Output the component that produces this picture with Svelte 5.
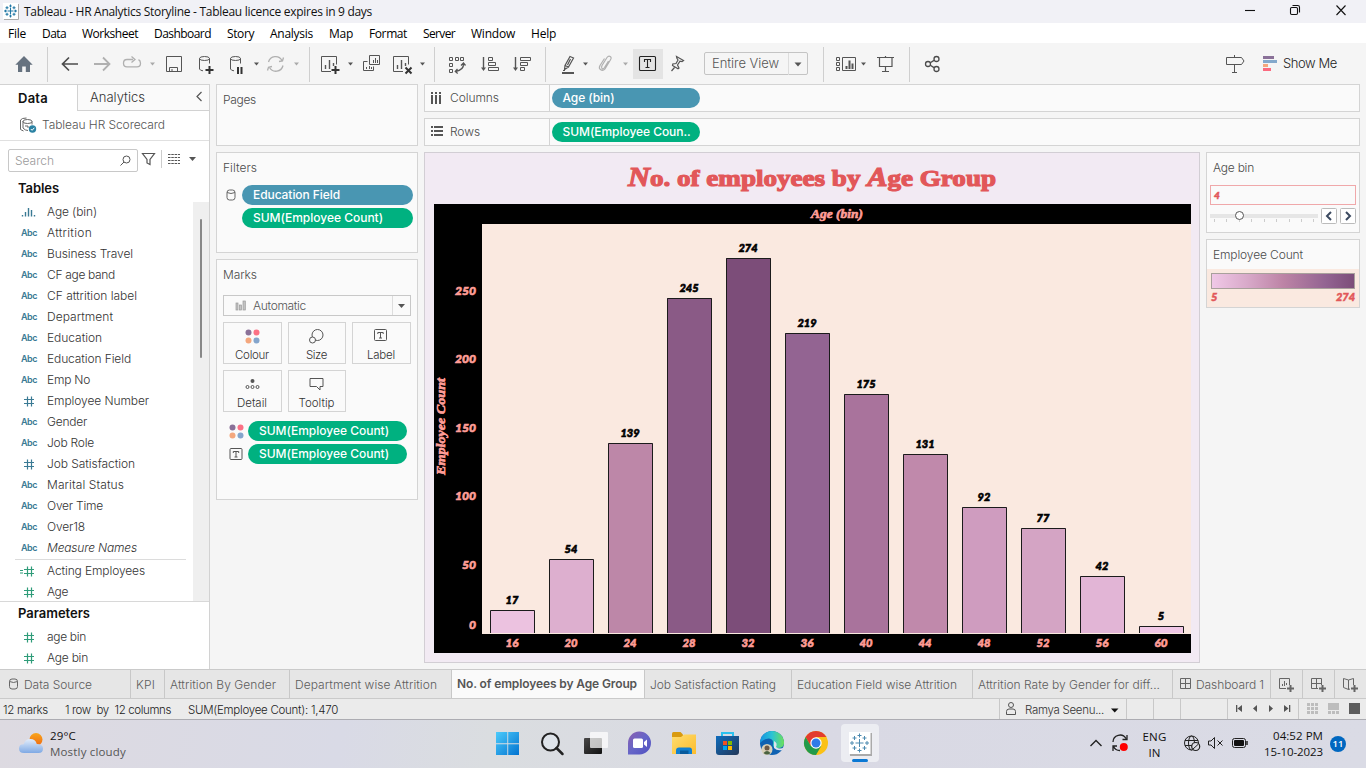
<script>
  // Tracks a label out (or in) so that it occupies the given width in pixels.
  function fit(node, width) {
    node.style.letterSpacing = '0px';
    const natural = node.getBoundingClientRect().width;
    const n = node.textContent.length;
    node.style.letterSpacing = (width - natural) / n + 'px';
  }

  const menus = [['File', 18], ['Data', 24], ['Worksheet', 56], ['Dashboard', 57], ['Story', 27], ['Analysis', 43], ['Map', 24], ['Format', 38], ['Server', 32], ['Window', 44], ['Help', 25]];

  const fields = [
    ['bin', 'Age (bin)', 50], ['abc', 'Attrition', 45], ['abc', 'Business Travel', 86], ['abc', 'CF age band', 68],
    ['abc', 'CF attrition label', 90], ['abc', 'Department', 66], ['abc', 'Education', 55], ['abc', 'Education Field', 84],
    ['abc', 'Emp No', 43], ['num', 'Employee Number', 102], ['abc', 'Gender', 40], ['abc', 'Job Role', 47],
    ['num', 'Job Satisfaction', 88], ['abc', 'Marital Status', 77], ['abc', 'Over Time', 56], ['abc', 'Over18', 38],
    ['abc', 'Measure Names', 90]
  ];
  const measures = [['calc', 'Acting Employees', 98], ['num', 'Age', 21]];
  const params = [['num', 'age bin', 39], ['num', 'Age bin', 41]];

  const bars = [
    [16, 17, '#ecc2e0', 610], [20, 54, '#ddafcf', 559], [24, 139, '#bd87a8', 443], [28, 245, '#8a5a86', 298],
    [32, 274, '#7c4d79', 258], [36, 219, '#936492', 333], [40, 175, '#a9739c', 394], [44, 131, '#c089ab', 454],
    [48, 92, '#cf9cbf', 507], [52, 77, '#d4a4c4', 528], [56, 42, '#e2b5d6', 576], [60, 5, '#f0c8e7', 626]
  ];
  const ticks = [[0, 625], [50, 565], [100, 496], [150, 428], [200, 359], [250, 291]];

  const tabs = [
    ['KPI', 19, 34], ['Attrition By Gender', 106, 125], ['Department wise Attrition', 142, 162],
    ['No. of employees by Age Group', 180, 193], ['Job Satisfaction Rating', 126, 147],
    ['Education Field wise Attrition', 160, 181], ['Attrition Rate by Gender for diff...', 182, 200]
  ];
</script>

{#snippet caret(x, y, c)}
  <path d="M{x - 2.5} {y - 1.5}h5l-2.5 3z" fill={c} />
{/snippet}

{#snippet dots()}
  <svg class="dots" width="15" height="15" viewBox="0 0 15 15">
    <circle cx="3.5" cy="3.5" r="3" fill="#8a7198" /><circle cx="11.5" cy="3.5" r="3" fill="#fb7185" />
    <circle cx="3.5" cy="11.5" r="3" fill="#f4a77d" /><circle cx="11.5" cy="11.5" r="3" fill="#84a5cc" />
  </svg>
{/snippet}

{#snippet labelIcon()}
  <svg width="14" height="13" viewBox="0 0 14 13" fill="none" stroke="#555">
    <rect x=".5" y=".5" width="12" height="11" rx="1" /><path d="M3.8 5V3.5h5.4V5M6.5 3.5V9M5 9h3" />
  </svg>
{/snippet}

{#snippet fieldRow(kind, name, w, green)}
  <div class="field" class:green>
    <span class="kind">
      {#if kind === 'abc'}<b use:fit={16}>Abc</b>
      {:else if kind === 'bin'}
        <svg width="16" height="12" viewBox="0 0 16 12" stroke="currentColor" stroke-width="1.4"><path d="M1.5 9v1.5M4.5 6v4.5M7.5 2v8.5M10.5 4v6.5M13.5 9v1.5" /></svg>
      {:else}
        <svg width="16" height="12" viewBox="0 0 16 12" stroke="currentColor" stroke-width="1.2" fill="none"><path d="M3 4.5h10M3 8.500h10M6.5 1.500v10M10.5 1.500v10" />{#if kind === 'calc'}<path d="M-1 5.500h3M-1 8h3" />{/if}</svg>
      {/if}
    </span>
    <span class="fname" class:ital={name === 'Measure Names'} use:fit={w}>{name}</span>
  </div>
{/snippet}

<div class="app">
  <header class="title">
    <svg width="16" height="17" viewBox="0 0 16 17"><rect width="15" height="16" fill="#fff" /><path d="M15.5 1v15.5H1" stroke="#aaa" fill="none" /><path d="M7.5 5v6M4.500 8h6M7.500 1.500v3M6.300 3h2.400M7.500 11.500v3M6.300 13h2.400M1 8h3M2.500 6.800v2.400M11 8h3M12.500 6.800v2.400M4 3.300v3M2.500 4.800h3M11 3.300v3M9.500 4.800h3M4 9.700v3M2.500 11.200h3M11 9.700v3M9.500 11.200h3" stroke="#2077a5" stroke-width="1.1" /></svg>
    <span class="grow"><span use:fit={348}>Tableau - HR Analytics Storyline - Tableau licence expires in 9 days</span></span>
    <svg width="126" height="23" viewBox="1240 0 126 23" fill="none" stroke="#111" stroke-width="1.1">
      <path d="M1245 10.500h10" /><rect x="1290.500" y="7.500" width="7" height="7" rx="1.200" /><path d="M1292.500 5.500h5.300q1.700 0 1.700 1.700v5.300" /><path d="M1336.500 5.500l9 9.500M1345.500 5.500l-9 9.500" />
    </svg>
  </header>

  <nav class="menu">{#each menus as [m, w]}<span use:fit={w}>{m}</span>{/each}</nav>

  <div class="toolbar">
    <svg width="47" height="41" viewBox="0 43 47 41"><path d="M24 56l8.700 8.700h-2.700V72h-4.200v-5.500h-3.600V72H18v-7.300h-2.700z" fill="#66727f" /></svg>
    <i></i>
    <svg width="38" height="41" viewBox="48 43 38 41" class="ln dark"><path d="M78 64H62.500M69 57.500L62.500 64l6.500 6.500" /></svg>
    <svg width="30" height="41" viewBox="86 43 30 41" class="ln pale"><path d="M94 64h15.500M103 57.500l6.500 6.500-6.500 6.500" stroke-width="1.800" /></svg>
    <svg width="44" height="41" viewBox="116 43 44 41" class="ln pale"><path d="M133 59.500h-6q-3.500 0-3.500 3.700t3.500 3.700h10q3.500 0 3.500-3.700 0-2.500-2-3.500M131.500 56.500l3.500 3-3.500 3" stroke-width="1.300" />{@render caret(152.500, 64, '#aaa')}</svg>
    <svg width="30" height="41" viewBox="160 43 30 41" class="ln"><path d="M166.500 56.500h15v15h-15zM169.500 71.500v-4h8v4M172 69v2.500" /></svg>
    <svg width="32" height="41" viewBox="190 43 32 41" class="ln"><ellipse cx="204.500" cy="58.500" rx="5" ry="2" /><path d="M199.500 58.500v10.500q.5 1.500 3.500 1.800M209.500 58.500v5" /><path d="M209.500 66v8M205.500 70h8" stroke="#333" stroke-width="2" /></svg>
    <svg width="42" height="41" viewBox="222 43 42 41" class="ln"><ellipse cx="235.500" cy="58.500" rx="5" ry="2" /><path d="M230.500 58.500v10.500q.5 1.500 3.500 1.800M240.500 58.500v5" /><path d="M238 67v7M241.500 67v7" stroke="#333" stroke-width="2" />{@render caret(256.500, 64, '#555')}</svg>
    <svg width="45" height="41" viewBox="264 43 45 41" class="ln pale"><path d="M268.500 62a7.300 7.300 0 0 1 13.500-1.500M283 65.500a7.300 7.300 0 0 1-13.500 2M279 61.500l3.500-.5 1-3.500M272 66.500l-3.500.7-1 3.300" stroke-width="1.300" />{@render caret(296.500, 64, '#aaa')}</svg>
    <i></i>
    <svg width="48" height="41" viewBox="310 43 48 41" class="ln"><path d="M331 71.500h-9.500v-15h15v8" /><path d="M325.500 65v4M329.500 60v9M333.500 63v3" stroke-width="1.400" /><path d="M335.500 66v8M331.500 70h8" stroke="#333" stroke-width="2" />{@render caret(350.500, 64, '#555')}</svg>
    <svg width="30" height="41" viewBox="358 43 30 41" class="ln"><path d="M369.500 55.500h10v9h-10zM367.500 61.500h-4v9h10v-4M373.500 60v3M375.500 58v5M377.500 60v3M366.500 67v2M369.500 66v3M371.500 67v2" /></svg>
    <svg width="46" height="41" viewBox="388 43 46 41" class="ln"><path d="M403 71.500h-9.500v-15h15v8" /><path d="M397.500 65v4M401.500 60v9M405.500 63v3" stroke-width="1.400" /><path d="M405.500 67.500l6 6M411.500 67.500l-6 6" stroke="#333" stroke-width="2" />{@render caret(422.500, 64, '#555')}</svg>
    <i></i>
    <svg width="39" height="41" viewBox="435 43 39 41" class="ln"><path d="M449.500 57.500h3v3h-3zM455.500 57.500h3v3h-3zM460.500 57.500h3v3h-3zM449.500 63.500h3v3h-3zM449.500 69.500h3v3h-3z" /><path d="M463.500 63.500q.5 6.500-8 8M461 65.500l2.500-2.500 2 2.500M457.500 69l-2.200 2.500 2.400 2" stroke-width="1.300" /></svg>
    <svg width="31" height="41" viewBox="474 43 31 41" class="ln"><path d="M483.500 57v12" stroke-width="1.400" /><path d="M481 67.500h5l-2.500 3.500z" fill="#555" stroke="none" /><path d="M488.500 57.500h4v3h-4zM488.500 62.500h7v3h-7zM488.500 67.500h10v3h-10z" /></svg>
    <svg width="40" height="41" viewBox="505 43 40 41" class="ln"><path d="M515.500 57v12" stroke-width="1.400" /><path d="M513 67.500h5l-2.500 3.500z" fill="#555" stroke="none" /><path d="M520.500 57.500h10v3h-10zM520.500 62.500h7v3h-7zM520.500 67.500h4v3h-4z" /></svg>
    <i></i>
    <svg width="47" height="41" viewBox="546 43 47 41" class="ln"><path d="M570 56.500l3.500 1.500-5 9-3.500-1.500zM565 65.500l-.5 4 4-2.500M570.500 59l-3 6M563 70.500h2" stroke-width="1.200" /><path d="M562 73h12" stroke-width="2" />{@render caret(585.500, 64, '#555')}</svg>
    <svg width="40" height="41" viewBox="593 43 40 41" class="ln pale"><path d="M608.500 61l-4 6.500q-1.500 2-2.500 1t0-3l5-8q1.500-2 3.200-1t.3 3.300l-5.500 9q-2 2.500-4.300 1t-.7-4.300l4.500-7" stroke-width="1.200" />{@render caret(625.500, 64, '#aaa')}</svg>
    <svg width="30" height="41" viewBox="633 43 30 41" class="ln"><rect x="633" y="49" width="30" height="30" fill="#e4e4e4" stroke="none" /><rect x="639.500" y="56.500" width="16" height="14" rx="1" stroke="#222" stroke-width="1.100" /><path d="M644.500 62v-2.500h6v2.500M647.500 60v7.500M645.500 67.500h4" stroke="#222" stroke-width="1.100" /></svg>
    <svg width="41" height="41" viewBox="663 43 41 41" class="ln"><path d="M676.500 56.500l7 4-1.500 1-2-.3-2.500 3.800 1.500 3-1 .7-5.500-3.200.3-1.500 3.200-.5 2-3.500-1.200-2zM674.500 67.500l-3 3.500" stroke-width="1.200" /></svg>
    <div class="select"><span use:fit={67}>Entire View</span><svg width="19" height="22" viewBox="0 0 19 22"><path d="M.5 0v22" stroke="#ddd" /><path d="M6.500 9.500h7l-3.500 4z" fill="#555" /></svg></div>
    <svg width="15" height="41" viewBox="0 0 15 41"></svg>
    <i></i>
    <svg width="46" height="41" viewBox="824 43 46 41" class="ln"><path d="M836.500 57.500h3v3h-3zM836.500 62.500h3v3h-3zM836.500 67.500h3v3h-3zM842.500 57.500h13v13h-13z" /><path d="M846.500 66v3M849.500 60.500v8.500M852.500 63.500v5.500" stroke-width="2" />{@render caret(863.500, 64, '#555')}</svg>
    <svg width="39" height="41" viewBox="870 43 39 41" class="ln"><path d="M877 57.500h17M879.500 58v8.500h12.500V58M885.500 56v1M885.500 67v4.500M882 71.500h7" stroke-width="1.200" /></svg>
    <i></i>
    <svg width="50" height="41" viewBox="910 43 50 41" class="ln dark"><g stroke-width="1.300"><circle cx="928" cy="64" r="2.500" /><circle cx="936.500" cy="59" r="2.500" /><circle cx="936.500" cy="69" r="2.500" /><path d="M930.300 62.800l3.700-2.400M930.300 65.300l3.700 2.300" /></g></svg>
    <span class="grow"></span>
    <svg width="37" height="41" viewBox="1220 43 37 41" class="ln"><path d="M1226.500 57.500h15l2.500 3.500-2.500 3.500h-15zM1234.500 55v2.500M1234.500 64.500v8M1232 72.500h5" /></svg>
    <svg width="26" height="41" viewBox="1257 43 26 41"><path d="M1263 56h11v3h-11z" fill="#8a7198" /><path d="M1263 60h14v3h-14z" fill="#84a9cc" /><path d="M1263 64h5v3h-5z" fill="#f4a77d" /><path d="M1263 68h8v3h-8z" fill="#fb6a7f" /></svg>
    <span class="showme" use:fit={54}>Show Me</span>
  </div>

  <div class="work">
    <aside class="side">
      <div class="sidetabs">
        <div class="on"><b use:fit={30}>Data</b></div>
        <div class="off"><span use:fit={55}>Analytics</span><svg width="8" height="12" viewBox="0 0 8 12" fill="none" stroke="#555" stroke-width="1.200"><path d="M6.500 1L2 5.500 6.500 10" /></svg></div>
      </div>
      <div class="source">
        <svg width="17" height="17" viewBox="0 0 17 17" fill="none" stroke="#666"><path d="M.5 3v9.500l3 1.500M.5 3q1-2 6-2M3 4v7q2 2.500 5 2.500M3 4.500q0-2 4.500-2t4.500 2-4.500 2T3 4.500M12 4.500v3M5 9h3v2" /><circle cx="12.500" cy="12" r="3.700" fill="#2b82a3" stroke="none" /><path d="M10.800 12l1.300 1.300 2.200-2.500" stroke="#fff" /></svg>
        <span use:fit={123}>Tableau HR Scorecard</span>
      </div>
      <div class="searchrow">
        <div class="search"><span use:fit={39}>Search</span><svg width="11" height="11" viewBox="0 0 11 11" fill="none" stroke="#555"><circle cx="6.500" cy="4.500" r="3.500" /><path d="M4 7L.5 10.500" /></svg></div>
        <svg width="63" height="20" viewBox="138 150 63 20" fill="none" stroke="#555"><path d="M142.500 154.500h12l-4.500 6v5l-3-1.500v-3.500z" stroke-width="1.200" /><path d="M161.500 151v18" stroke="#ccc" /><path d="M168 155.500h12M168 158.500h12M168 161.500h12M168 164.500h12" stroke-dasharray="2.500 .8" /><path d="M189 158h7l-3.500 4z" fill="#555" stroke="none" /></svg>
      </div>
      <div class="list">
        <h3><span use:fit={41}>Tables</span></h3>
        <div class="rows">
          {#each fields as [k, n, w]}{@render fieldRow(k, n, w, false)}{/each}
          <hr />
          {#each measures as [k, n, w]}{@render fieldRow(k, n, w, true)}{/each}
        </div>
        <div class="scroll"><div></div></div>
      </div>
      <div class="params">
        <h3><span use:fit={72}>Parameters</span></h3>
        {#each params as [k, n, w]}{@render fieldRow(k, n, w, true)}{/each}
      </div>
    </aside>

    <section class="cards">
      <div class="card pages"><span use:fit={33}>Pages</span></div>
      <div class="card filters">
        <span use:fit={34}>Filters</span>
        <div class="prow"><svg width="16" height="12" viewBox="-.5 0 16 12" fill="none" stroke="#666"><rect x=".500" y="1" width="8" height="10" rx="2.500" /><path d="M.5 3.500q4 2 8 0" /></svg><div class="pill blue"><span use:fit={87}>Education Field</span></div></div>
        <div class="prow"><svg width="16" height="12"></svg><div class="pill"><span use:fit={130}>SUM(Employee Count)</span></div></div>
      </div>
      <div class="card marks">
        <span use:fit={34}>Marks</span>
        <div class="type"><svg width="12" height="12" viewBox="0 0 12 12" fill="#c4c4c4" stroke="#999" stroke-width=".7"><rect x="1" y="3" width="2" height="7" /><rect x="4.500" y="5" width="2" height="5" /><rect x="8" y="1" width="2.300" height="9" /></svg><span use:fit={53}>Automatic</span><svg class="drop" width="18" height="19" viewBox="0 0 18 19"><path d="M.5 0v19" stroke="#ddd" /><path d="M6 8h7l-3.500 4z" fill="#555" /></svg></div>
        <div class="btns">
          <div>{@render dots()}<span use:fit={34}>Colour</span></div>
          <div><svg width="15" height="15" viewBox="0 0 15 15" fill="none" stroke="#555"><circle cx="8.500" cy="6" r="5.500" /><circle cx="3.500" cy="11" r="3" fill="#fafafa" /></svg><span use:fit={21}>Size</span></div>
          <div>{@render labelIcon()}<span use:fit={28}>Label</span></div>
          <div><svg width="15" height="13" viewBox="0 0 15 13" fill="none" stroke="#555"><circle cx="7.500" cy="4" r="2" fill="#555" stroke="none" /><circle cx="2.500" cy="10" r="1.500" /><circle cx="7.500" cy="10" r="1.500" /><circle cx="12.500" cy="10" r="1.500" /></svg><span use:fit={30}>Detail</span></div>
          <div><svg width="15" height="14" viewBox="0 0 15 14" fill="none" stroke="#555"><path d="M1 1.500h13v8h-3v3.500L7.500 9.500H1z" /></svg><span use:fit={36}>Tooltip</span></div>
        </div>
        <div class="prow two">{@render dots()}<div class="pill"><span use:fit={130}>SUM(Employee Count)</span></div></div>
        <div class="prow two">{@render labelIcon()}<div class="pill"><span use:fit={130}>SUM(Employee Count)</span></div></div>
      </div>
    </section>

    <section class="main">
      <div class="shelf"><div class="shead"><svg width="12" height="12" viewBox="0 0 12 12" stroke="#555" stroke-width="2"><path d="M1 0v2M1 3v9M5 0v2M5 3v9M9 0v2M9 3v9" /></svg><span use:fit={49}>Columns</span></div><div class="pill blue"><span use:fit={52}>Age (bin)</span></div></div>
      <div class="shelf"><div class="shead"><svg width="12" height="12" viewBox="0 0 12 12" stroke="#555" stroke-width="2"><path d="M0 1h2M3 1h9M0 5h2M3 5h9M0 9h2M3 9h9" /></svg><span use:fit={30}>Rows</span></div><div class="pill"><span use:fit={128}>SUM(Employee Coun..</span></div></div>
      <div class="lower">
        <svg class="view" width="776" height="511" viewBox="424 152 776 511">
          <rect x="424.500" y="152.500" width="775" height="510" fill="#f2eaf3" stroke="#d2ced4" />
          <text class="head" x="628" y="186" textLength="368" lengthAdjust="spacingAndGlyphs"><tspan class="swash">N</tspan>o. of employees by <tspan class="swash">A</tspan>ge Group</text>
          <rect x="434" y="204" width="757" height="449" fill="#000" />
          <rect x="482" y="224" width="709" height="410" fill="#fae9e0" />
          <text class="axis" x="811" y="218" textLength="52" lengthAdjust="spacingAndGlyphs">Age (bin)</text>
          <text class="axis" transform="translate(445 475) rotate(-90)" textLength="97" lengthAdjust="spacingAndGlyphs">Employee Count</text>
          {#each ticks as [v, y]}<text class="num pink" x="476" y={y + 4} text-anchor="end" textLength={String(v).length * 7} lengthAdjust="spacingAndGlyphs">{v}</text>{/each}
          {#each bars as [bin, v, c, top], i}
            {@const x = 490 + Math.round(i * 59)}
            <rect {x} y={top} width="45" height={633 - top} fill={c} />
            <path d="M{x + 0.5} 633V{top + 0.5}h44V633" fill="none" stroke="#1b1b1b" />
            <text class="num" x={x + 22} y={top - 6} text-anchor="middle" textLength={String(v).length * 6.4} lengthAdjust="spacingAndGlyphs">{v}</text>
            <text class="num pink" x={x + 22} y="647" text-anchor="middle" textLength="13" lengthAdjust="spacingAndGlyphs">{bin}</text>
          {/each}
        </svg>
        <div class="right">
          <div class="card param">
            <span use:fit={41}>Age bin</span>
            <div class="inp">4</div>
            <div class="slide">
              <svg width="108" height="16" viewBox="1210 208 108 16"><path d="M1210 214h108v4h-108z" fill="#e6e6e6" /><path d="M1214.500 219v3M1226.500 219v3M1239.500 219v3M1251.500 219v3M1264.500 219v3M1276.500 219v3M1289.500 219v3M1301.500 219v3M1313.500 219v3" stroke="#ccc" /><circle cx="1239.500" cy="215.500" r="4" fill="#fff" stroke="#555" /></svg>
              <svg class="btn" width="16" height="16" viewBox="0 0 16 16"><rect x=".5" y=".5" width="15" height="15" rx="1" fill="#fff" stroke="#bbb" /><path d="M10 4L6 8l4 4" fill="none" stroke="#3c4a60" stroke-width="2" /></svg>
              <svg class="btn" width="16" height="16" viewBox="0 0 16 16"><rect x=".5" y=".5" width="15" height="15" rx="1" fill="#fff" stroke="#bbb" /><path d="M6 4l4 4-4 4" fill="none" stroke="#3c4a60" stroke-width="2" /></svg>
            </div>
          </div>
          <div class="card legend">
            <span use:fit={90}>Employee Count</span>
            <div class="ramp"><div></div><p><b>5</b><b use:fit={19}>274</b></p></div>
          </div>
        </div>
      </div>
    </section>
  </div>

  <div class="tabs">
    <div class="tab ds"><svg width="9" height="12" viewBox="0 0 9 12" fill="none" stroke="#666"><rect x=".500" y="1" width="8" height="10" rx="2.500" /><path d="M.5 3.500q4 2 8 0" /></svg><span use:fit={68}>Data Source</span></div>
    {#each tabs as [t, w, tw], i}<div class="tab" class:active={i === 3} style="width:{tw}px"><span use:fit={w}>{t}</span></div>{/each}
    <div class="tab dash"><svg width="12" height="12" viewBox="0 0 12 12" fill="none" stroke="#666"><path d="M.5.5h10v10H.5zM5.500.5v10M.5 5.500h10" /></svg><span use:fit={68}>Dashboard 1</span></div>
    <div class="tab new"><svg width="16" height="16" viewBox="0 0 16 16" fill="none" stroke="#666"><path d="M8 11.500H1.500V1.500h10V8M4.500 7v2M6.500 4v5M8.500 6v2" /><path d="M12.500 8v7M9 11.500h7" stroke-width="2" /></svg></div>
    <div class="tab new"><svg width="16" height="16" viewBox="0 0 16 16" fill="none" stroke="#666"><path d="M8 11.500H1.500V1.500h10V8M6.500 1.500v10M1.500 6.500h10" /><path d="M12.500 8v7M9 11.500h7" stroke-width="2" /></svg></div>
    <div class="tab new"><svg width="16" height="16" viewBox="0 0 16 16" fill="none" stroke="#666"><path d="M11.500 8V1.500l-5 1.500-5-1.500v9l5 2V3M8 12l-1.500.5" /><path d="M12.500 8v7M9 11.500h7" stroke-width="2" /></svg></div>
  </div>

  <div class="status">
    <span class="s1" use:fit={45}>12 marks</span><span class="s2" use:fit={106}>1 row&nbsp; by &nbsp;12 columns</span><span class="grow"><span use:fit={150}>SUM(Employee Count): 1,470</span></span>
    <div class="user"><svg width="10" height="13" viewBox="0 0 10 13" fill="none" stroke="#555"><circle cx="5" cy="3" r="2.500" /><path d="M.5 12.500V9.500q0-2.500 2.500-2.500h4q2.500 0 2.500 2.500v3z" /></svg><span use:fit={79}>Ramya Seenu...</span><svg width="8" height="5" viewBox="0 0 8 5"><path d="M0 .5h7.500L3.700 4.500z" fill="#111" /></svg></div>
    <div class="cell"></div><div class="cell"></div><div class="cell wide"></div>
    <div class="cell nav"><svg width="70" height="20" viewBox="1228 700 70 20" fill="#555"><path d="M1236 706h1.300v7H1236zM1242 706v7l-4.500-3.500zM1257 706v7l-4-3.500zM1269 706v7l4-3.500zM1284 706v7l4.500-3.500zM1289 706h1.300v7H1289z" /></svg></div>
    <div class="cell views"><svg width="67" height="20" viewBox="1299 700 67 20"><path d="M1307 704h3v3h-3zM1311 704h3v3h-3zM1315 704h3v3h-3zM1307 708h3v3h-3zM1311 708h3v3h-3zM1315 708h3v3h-3zM1307 712h3v3h-3zM1311 712h3v3h-3zM1315 712h3v3h-3zM1328 704h11v7h-11zM1328 712h3v3h-3zM1332 712h3v3h-3zM1336 712h3v3h-3z" fill="#bdbdbd" /><path d="M1349 704h11v11h-11z" fill="#5c5c5c" /></svg></div>
  </div>

  <footer class="taskbar">
    <svg width="50" height="47" viewBox="0 721 50 47">
      <defs>
        <linearGradient id="cl" x2="0" y2="1"><stop stop-color="#e2edfb" /><stop offset="1" stop-color="#7fa9e4" /></linearGradient>
        <linearGradient id="win" gradientUnits="userSpaceOnUse" x1="496" y1="733" x2="519" y2="756"><stop stop-color="#4ccbfb" /><stop offset="1" stop-color="#0273d0" /></linearGradient>
        <linearGradient id="ch" x2="1" y2="1"><stop stop-color="#8b5fb0" /><stop offset=".5" stop-color="#6666c8" /><stop offset="1" stop-color="#5050c0" /></linearGradient>
        <linearGradient id="fo" x2="1" y2="1"><stop stop-color="#ffdd70" /><stop offset="1" stop-color="#fcbc2c" /></linearGradient>
        <linearGradient id="st" x2="1" y2="1"><stop stop-color="#0f6cbd" /><stop offset="1" stop-color="#233757" /></linearGradient>
        <linearGradient id="ed" x2="1"><stop stop-color="#1593e0" /><stop offset=".5" stop-color="#2cc3d5" /><stop offset="1" stop-color="#6be05a" /></linearGradient>
        <linearGradient id="su" x2="0" y2="1"><stop stop-color="#f9a51a" /><stop offset="1" stop-color="#ee6a15" /></linearGradient>
        <linearGradient id="tv" x2="1" y2="1"><stop stop-color="#484848" /><stop offset="1" stop-color="#111" /></linearGradient>
      </defs>
      <circle cx="36" cy="740.500" r="6.500" fill="url(#su)" /><path d="M24 754q-5 0-5-4.500t4.700-4.300q1.500-5.200 6.600-5.200 5.200 0 6.500 5 6.200 0 6.200 4.500 0 4.500-4.500 4.500z" fill="url(#cl)" />
    </svg>
    <div class="weather"><span use:fit={26}>29°C</span><small use:fit={76}>Mostly cloudy</small></div>
    <span class="grow"></span>
    <svg width="44" height="47" viewBox="486 721 44 47"><path d="M496 733h11.300v11.300H496zM508.200 733h10.800v11.300h-10.800zM496 745.200h11.300V756H496zM508.200 745.200h10.800V756h-10.800z" fill="url(#win)" /></svg>
    <svg width="44" height="47" viewBox="530 721 44 47"><circle cx="550.500" cy="743" r="8.500" fill="#dfe4ea" stroke="#222" stroke-width="2" /><path d="M556.500 749l6 6" stroke="#222" stroke-width="2.500" stroke-linecap="round" /></svg>
    <svg width="44" height="47" viewBox="574 721 44 47"><rect x="584" y="739" width="18" height="16" rx="1" fill="url(#tv)" /><rect x="590" y="733" width="18" height="16" rx="1" fill="#fff" opacity=".72" /></svg>
    <svg width="44" height="47" viewBox="618 721 44 47"><path d="M628 755.500V744.500a11.500 11.500 0 1 1 11.500 11z" fill="url(#ch)" /><rect x="633" y="739.500" width="10" height="9.500" rx="1.500" fill="#fff" /><path d="M644 743l3-2.500v7.500l-3-2.500z" fill="#fff" /></svg>
    <svg width="44" height="47" viewBox="662 721 44 47"><path d="M672 734.500q0-1.500 1.500-1.500h7l2.500 2.500v5h-11z" fill="#d99a10" /><path d="M672 738h9l3-2.500h12V755h-24z" fill="url(#fo)" /><path d="M676 755v-3.500q0-3 3-3h10.500q2.500 0 2.500 3v3.500z" fill="#1180d0" /><path d="M680 751.500h8.500V755H680z" fill="#075a9c" /></svg>
    <svg width="44" height="47" viewBox="706 721 44 47"><path d="M722 738v-4h11v4" stroke="#2bc1ee" stroke-width="2" fill="none" /><path d="M716 737h23v16q0 3-3 3h-17q-3 0-3-3z" fill="url(#st)" /><path d="M723 742h4v4h-4z" fill="#f25022" /><path d="M728 742h4v4h-4z" fill="#7fba00" /><path d="M723 747h4v4h-4z" fill="#00a4ef" /><path d="M728 747h4v4h-4z" fill="#ffb900" /></svg>
    <svg width="44" height="47" viewBox="750 721 44 47"><circle cx="772" cy="744" r="12" fill="#0f62b2" /><path d="M760 744a12 12 0 0 1 24 0q0 5-6 5-6 0-5-4 .8-5-4-5.500-5-.2-9 4.500z" fill="url(#ed)" /><path d="M774 742q4 2 2 6 4 3 8 0l-2 3q-5 1-8-2z" fill="#dce4ee" /><circle cx="767" cy="750.500" r="5.500" fill="#d8d0b8" /><circle cx="767" cy="749" r="2.500" fill="#6b5947" /><path d="M763.500 754q3.500-4 7 0-3.500 3-7 0z" fill="#4a6240" /></svg>
    <svg width="44" height="47" viewBox="794 721 44 47"><circle cx="816" cy="744" r="12" fill="#fbc116" /><path d="M805.600 738A12 12 0 0 1 826.400 738H816l-5.200 9z" fill="#e33b2e" /><path d="M805.600 738a12 12 0 0 0 10.400 18l5.200-9-5.200 1-5.200-1z" fill="#229a4a" /><circle cx="816" cy="744" r="5.700" fill="#fff" /><circle cx="816" cy="744" r="4.500" fill="#2f7be8" /></svg>
    <svg width="44" height="47" viewBox="838 721 44 47"><rect x="841" y="725" width="38" height="38" rx="4" fill="#ecedf2" /><path d="M871 734v22h-21" stroke="#aaa" fill="none" stroke-width="2" /><rect x="849" y="733" width="21.500" height="22" fill="#fff" /><path d="M859.500 740v8M855.500 744h8M859.500 734.500v4M857.500 736.500h4M859.500 749.500v4M857.500 751.500h4M850 744h4M852 742v4M865 744h4M867 742v4M854.500 737v4M852.500 739h4M864.500 737v4M862.500 739h4M854.500 747v4M852.500 749h4M864.500 747v4M862.500 749h4" stroke="#4d8ab0" /><rect x="852" y="760" width="16" height="3" rx="1.500" fill="#0a78d4" /></svg>
    <span class="grow2"></span>
    <svg width="55" height="47" viewBox="1085 721 55 47" fill="none" stroke="#222"><path d="M1090.500 747l5.500-5.500 5.500 5.500" stroke-width="1.400" /><path d="M1113 743a7 7 0 0 1 13-3.500M1127 736v4.500h-4.500M1120 751.500a7 7 0 0 1-6.500-4M1113 752v-5h4" stroke-width="1.300" /><circle cx="1123.800" cy="748" r="4" fill="#f00" stroke="none" /></svg>
    <div class="lang"><span use:fit={24}>ENG</span><span use:fit={12}>IN</span></div>
    <svg width="80" height="47" viewBox="1174 721 80 47" fill="none" stroke="#222"><circle cx="1191.500" cy="744" r="7" /><ellipse cx="1191.500" cy="744" rx="3" ry="7" /><path d="M1185 741.500h13M1185 746.500h7" /><circle cx="1195.700" cy="747.500" r="4" fill="#dcdce5" stroke-width="1.200" /><path d="M1193 750l5.500-5" /><path d="M1208.500 742h2.500l3.500-3.500v11L1211 746h-2.500zM1217.500 741.500l5 5M1222.500 741.500l-5 5" /><rect x="1232.500" y="739.500" width="13" height="9" rx="2" /><rect x="1234" y="741" width="10" height="6" rx="1" fill="#111" stroke="none" /><path d="M1247 742v4" stroke-width="1.500" /></svg>
    <div class="clock"><span use:fit={50}>04:52 PM</span><span use:fit={59}>15-10-2023</span></div>
    <div class="note"><span>11</span></div>
  </footer>
</div>

<style>
  :global(body) { overflow: hidden; }
  .app { width: 1366px; height: 768px; display: flex; flex-direction: column; background: #f5f5f5; font: 350 12px/16px Inter, sans-serif; color: #4a4a4a; white-space: nowrap; overflow: hidden; }
  .app * { box-sizing: border-box; }
  svg { display: block; flex: none; }
  span, b, small { display: inline-block; }
  .grow { flex: 1; }
  .title { height: 23px; flex: none; background: #f1f1f6; display: flex; align-items: center; color: #111; font: 12px/16px "Open Sans", sans-serif; padding-left: 3px; }
  .title .grow { padding-left: 5px; }
  .menu { height: 20px; flex: none; background: #fff; display: flex; gap: 16px; padding: 2px 8px; color: #000; font: 12px/17px "Open Sans", sans-serif; }
  .toolbar { height: 41px; flex: none; display: flex; }
  .toolbar i { width: 1px; height: 35px; margin-top: 4px; background: #cfcfcf; flex: none; }
  .ln { fill: none; stroke: #555; stroke-width: 1; }
  .ln.dark { stroke: #4c4c4c; stroke-width: 1.7; }
  .ln.pale { stroke: #b0b0b0; }
  .ln :global(path[fill]) { stroke: none; }
  .select { width: 104px; height: 23px; margin-top: 9px; border: 1px solid #c4c4c4; border-radius: 2px; display: flex; justify-content: space-between; padding-left: 7px; font-size: 13px; line-height: 21px; flex: none; color: #555; }
  .showme { font-size: 13px; line-height: 41px; color: #222; margin-right: 29px; }
  .work { height: 585px; flex: none; display: flex; }

  .side { width: 210px; height: 585px; background: #fff; border-right: 1px solid #d2d2d2; display: flex; flex-direction: column; flex: none; color: #333; }
  .sidetabs { height: 27px; display: flex; flex: none; font-size: 13px; line-height: 26px; }
  .on { width: 77px; padding-left: 18px; border-top: 1px solid #d2d2d2; color: #111; }
  .on b { font-weight: 600; }
  .off { flex: 1; background: #fafafa; border: 1px solid #d2d2d2; border-right: 0; padding: 0 6px 0 12px; display: flex; justify-content: space-between; align-items: center; line-height: 25px; }
  .off svg { margin-bottom: 2px; }
  .source { height: 30px; flex: none; border-bottom: 1px solid #e0e0e0; display: flex; gap: 6px; padding: 6px 0 0 20px; color: #555; }
  .source span { margin-left: -1px; }
  .searchrow { display: flex; padding: 8px 0 0 8px; height: 34px; flex: none; }
  .search { width: 130px; height: 23px; border: 1px solid #c8c8c8; border-radius: 2px; display: flex; justify-content: space-between; align-items: center; padding: 0 6px; color: #9a9a9a; }
  .list { height: 427px; flex: none; display: grid; grid-template-columns: 193px 16px; grid-template-rows: 27px 1fr; border-bottom: 1px solid #d8d8d8; overflow: hidden; }
  h3 { margin: 0; padding: 5px 0 0 18px; font-size: 13px; line-height: 17px; font-weight: 600; color: #111; grid-column: 1 / 3; }
  .rows { height: 399px; margin-top: -1px; overflow: hidden; }
  .scroll { background: #efefef; padding: 17px 0 0 7px; }
  .scroll div { width: 2px; height: 139px; background: #888; border-radius: 1px; }
  .field { height: 21px; display: flex; align-items: center; padding-left: 21px; color: #333; }
  .kind { width: 26px; color: #3a7a94; }
  .kind b { font-size: 9px; font-weight: 600; line-height: 20px; vertical-align: middle; }
  .kind svg { overflow: visible; }
  .green .kind { color: #2f9c79; }
  .ital { font-style: italic; }
  hr { margin: 1px 7px 0 15px; border: 0; border-top: 1px solid #dcdcdc; height: 1px; }
  .params h3 { padding-top: 3px; height: 24px; }

  .cards { width: 202px; margin-left: 6px; display: flex; flex-direction: column; gap: 6px; flex: none; }
  .card { background: #fafafa; border: 1px solid #d4d4d4; padding: 7px 6px 0; }
  .pages { height: 62px; }
  .filters { height: 101px; padding-right: 4px; }
  .marks { height: 241px; }
  .prow { display: flex; align-items: center; padding-left: 3px; margin-bottom: 3px; }
  .filters > span { margin-bottom: 9px; }
  .pill { height: 20px; border-radius: 10px; background: #00b180; color: #fff; padding-left: 11px; line-height: 20px; flex: 1; font-weight: 450; }
  .pill.blue { background: #4996b2; }
  .prow.two { padding: 0 4px 0 6px; }
  .prow.two .pill { margin-left: 4px; }
  .prow.two svg { width: 15px; }
  .type { height: 21px; margin-top: 12px; border: 1px solid #c8c8c8; display: flex; align-items: center; padding-left: 11px; line-height: 19px; color: #555; }
  .type span { margin-left: 6px; flex: none; }
  .drop { margin-left: auto; }
  .btns { display: grid; grid-template-columns: 59px 58px 59px; gap: 6px; margin: 6px 0 9px; }
  .btns > div { height: 42px; border: 1px solid #d4d4d4; display: flex; flex-direction: column; align-items: center; justify-content: space-between; padding: 6px 1px 0 0; font-size: 11.500px; color: #333; line-height: 15px; }
  .marks > span { display: block; width: max-content; }

  .main { margin-left: 6px; width: 936px; display: flex; flex-direction: column; gap: 6px; flex: none; }
  .shelf { height: 28px; border: 1px solid #d4d4d4; background: #fafafa; display: flex; align-items: center; flex: none; }
  .shead { width: 125px; height: 26px; border-right: 1px solid #d4d4d4; display: flex; align-items: center; gap: 7px; padding-left: 6px; }
  .shelf .pill { flex: none; width: 148px; margin-left: 2px; padding-left: 10.500px; }
  .lower { display: flex; gap: 6px; }
  .head { font: 700 24px "Liberation Serif", serif; fill: #e25759; stroke: #e25759; stroke-width: 1.2; }
  .swash { font-style: italic; font-size: 27px; }
  .axis { font: italic 700 12px "Liberation Serif", serif; fill: #ff9d97; stroke: #ff9d97; stroke-width: .6; }
  .num { font: italic 900 11px Lato, Inter, sans-serif; fill: #000; stroke: #000; stroke-width: .6; }
  .num.pink { fill: #ff9d97; stroke: #ff9d97; }
  .right { display: flex; flex-direction: column; gap: 6px; width: 154px; }
  .param { height: 81px; padding: 7px 3px 0; }
  .param > span { margin-left: 3px; }
  .inp { height: 20px; margin-top: 9px; border: 1px solid #f0a8aa; color: #e25759; font: italic 900 10px/18px Lato, sans-serif; -webkit-text-stroke: .5px #e25759; padding-left: 3px; }
  .slide { display: flex; gap: 3px; margin-top: 3px; }
  .legend { height: 69px; padding: 7px 0 0; }
  .legend > span { margin-left: 6px; display: block; width: max-content; }
  .ramp { margin-top: 6px; height: 38px; background: #fae9e0; padding: 4px 4px 0; }
  .ramp div { height: 16px; border: 1px solid #a8a09c; background: linear-gradient(90deg, #f0c8e7, #d8a9c9 25%, #bd84a6 50%, #936492 80%, #7c4d79); }
  .ramp p { margin: 0; display: flex; justify-content: space-between; color: #e25759; font: italic 900 11px/16px Lato, sans-serif; -webkit-text-stroke: .5px #e25759; }

  .tabs { height: 30px; flex: none; display: flex; border-top: 1px solid #cacaca; border-bottom: 1px solid #cacaca; background: #e6e6e6; color: #5c5c5c; line-height: 29px; }
  .tab { border-right: 1px solid #c8c8c8; padding-left: 5px; flex: none; overflow: hidden; }
  .tab.active { background: #fafafa; font-weight: 600; color: #555; line-height: 27px; }
  .ds { width: 131px; display: flex; gap: 6px; padding: 0 0 0 9px; }
  .ds svg, .dash svg { margin-top: 8px; }
  .dash { width: 98px; display: flex; gap: 4px; padding-left: 7px; }
  .new { width: 32px; padding: 7px 0 0 7px; }
  .status { height: 21px; flex: none; display: flex; background: #ebebeb; border-bottom: 1px solid #acacb2; line-height: 22px; font-size: 11.500px; color: #222; padding-left: 3px; }
  .s2 { margin: 0 17px 0 17px; }
  .user { width: 127px; border-left: 1px solid #c8c8c8; display: flex; padding-left: 6px; gap: 9px; color: #333; }
  .user svg { margin-top: 3px; }
  .user svg:last-child { margin-top: 9px; margin-left: -2px; }
  .cell { width: 27px; border-left: 1px solid #c8c8c8; flex: none; }
  .cell.wide { width: 47px; }
  .cell.nav { width: 71px; }
  .cell.views { width: 68px; }
  .taskbar { height: 48px; flex: none; display: flex; background: linear-gradient(100deg, #dddae1, #d9dae6 25%, #dadde0 36%, #d9d9e4 60%, #dadbe5); color: #111; font: 11.500px/16px "Open Sans", sans-serif; }
  .weather { display: flex; flex-direction: column; align-items: flex-start; padding-top: 8px; width: 80px; }
  .weather small { font-size: 11.500px; color: #555; }
  .taskbar .grow { flex: none; width: 356px; }
  .grow2 { width: 203px; flex: none; }
  .lang { width: 34px; padding: 9px 6px 0 1px; display: flex; flex-direction: column; align-items: center; }
  .clock { width: 69px; display: flex; flex-direction: column; align-items: flex-end; padding-top: 8px; }
  .note { width: 16px; height: 16px; border-radius: 8px; background: #0067c0; color: #fff; margin: 16px 0 0 7px; text-align: center; font-size: 9.500px; line-height: 16px; font-weight: 600; }
</style>
